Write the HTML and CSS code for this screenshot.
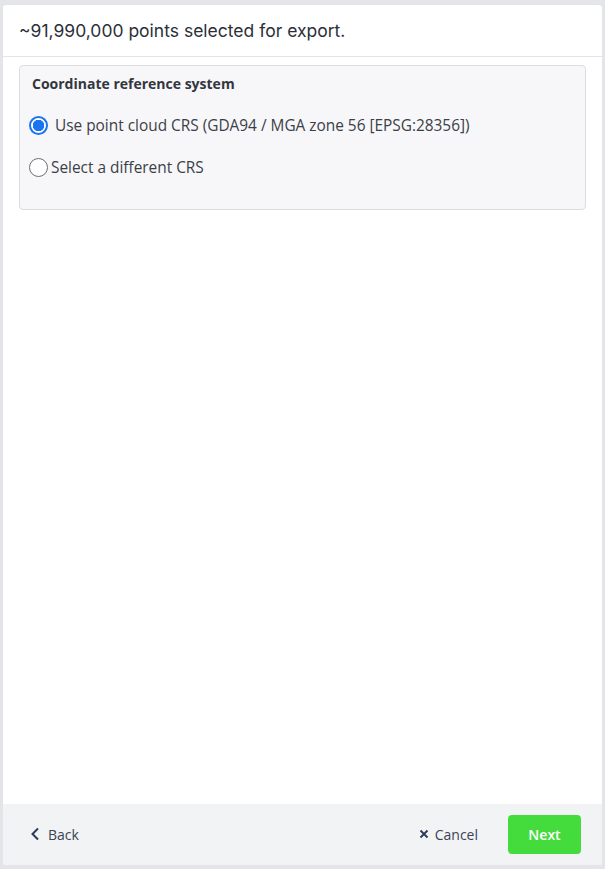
FILE: index.html
```html
<!DOCTYPE html>
<html lang="en">
  <head>
    <meta charset="UTF-8" />
    <meta name="viewport" content="width=device-width, initial-scale=1.0" />
    <title>Export points</title>
    <link rel="stylesheet" href="styles.css">
  </head>
  <body>
    <div class="dialog">
      <div class="header">~91,990,000 points selected for export.</div>

      <div class="body">
        <div class="card">
          <div class="card-title">Coordinate reference system</div>
          <label class="option selected">
            <span class="radio"></span>
            <span>Use point cloud CRS (GDA94 / MGA zone 56 [EPSG:28356])</span>
          </label>
          <label class="option tight">
            <span class="radio"></span>
            <span>Select a different CRS</span>
          </label>
        </div>
      </div>

      <div class="footer">
        <button class="link back">
          <svg width="10" height="14" viewBox="0 0 10 14"><path d="M8 1.5 L2.5 7 L8 12.5" fill="none" stroke="#2b3a57" stroke-width="2"/></svg>
          Back
        </button>
        <div class="actions">
          <button class="link cancel">
            <svg width="10" height="10" viewBox="0 0 10 10"><path d="M1.5 1.5 L8.5 8.5 M8.5 1.5 L1.5 8.5" stroke="#2b3a57" stroke-width="1.8"/></svg>
            Cancel
          </button>
          <button class="next">Next</button>
        </div>
      </div>
    </div>
  </body>
</html>
```

FILE: styles.css
```css
* {
  margin: 0;
  padding: 0;
  box-sizing: border-box;
}

body {
  height: 100vh;
  background: #e4e5e8;
  padding: 5px 3px 4px 3px;
  font-family: "Open Sans", "Noto Sans", sans-serif;
  color: #3b3f48;
}

.dialog {
  height: 100%;
  background: #fff;
  border-radius: 3px;
  display: flex;
  flex-direction: column;
  overflow: hidden;
}

.header {
  height: 52px;
  padding: 0 16px;
  display: flex;
  align-items: center;
  font-family: "Inter", sans-serif;
  font-size: 17.5px;
  color: #2b2f38;
  border-bottom: 1px solid #e3e4e7;
}

.body {
  flex: 1;
  padding: 8px 16px;
}

.card {
  background: #f7f7f9;
  border: 1px solid #dcdde0;
  border-radius: 4px;
  padding: 8px 12px 32px 9px;
}

.card-title {
  font-size: 14px;
  font-weight: 700;
  color: #33363d;
  padding-left: 3px;
  margin-bottom: 22px;
}

.option {
  display: flex;
  align-items: center;
  gap: 7px;
  font-size: 15.4px;
  height: 20px;
  margin-bottom: 22px;
}

.option:last-child {
  margin-bottom: 0;
}

.option.tight {
  gap: 3px;
}

.radio {
  width: 19px;
  height: 19px;
  border-radius: 50%;
  border: 1.5px solid #6b6e75;
  background: #fff;
  flex: none;
}

.option.selected .radio {
  border: 2px solid #1a73f0;
  background: radial-gradient(circle, #1a73f0 0 5.5px, #fff 6px);
}

.footer {
  height: 61px;
  background: #f2f3f5;
  display: flex;
  align-items: center;
  justify-content: space-between;
  padding: 0 21px 1px 27px;
}

.actions {
  display: flex;
  align-items: center;
  gap: 30px;
}

button {
  font-family: inherit;
  border: none;
  background: none;
  cursor: pointer;
}

.link {
  display: flex;
  align-items: center;
  gap: 8px;
  font-size: 14px;
  color: #3b4356;
}

.cancel {
  gap: 6px;
}

.next {
  width: 73px;
  height: 39px;
  border-radius: 4px;
  background: #44dc3c;
  color: #fff;
  font-size: 14px;
  font-weight: 600;
}
```
